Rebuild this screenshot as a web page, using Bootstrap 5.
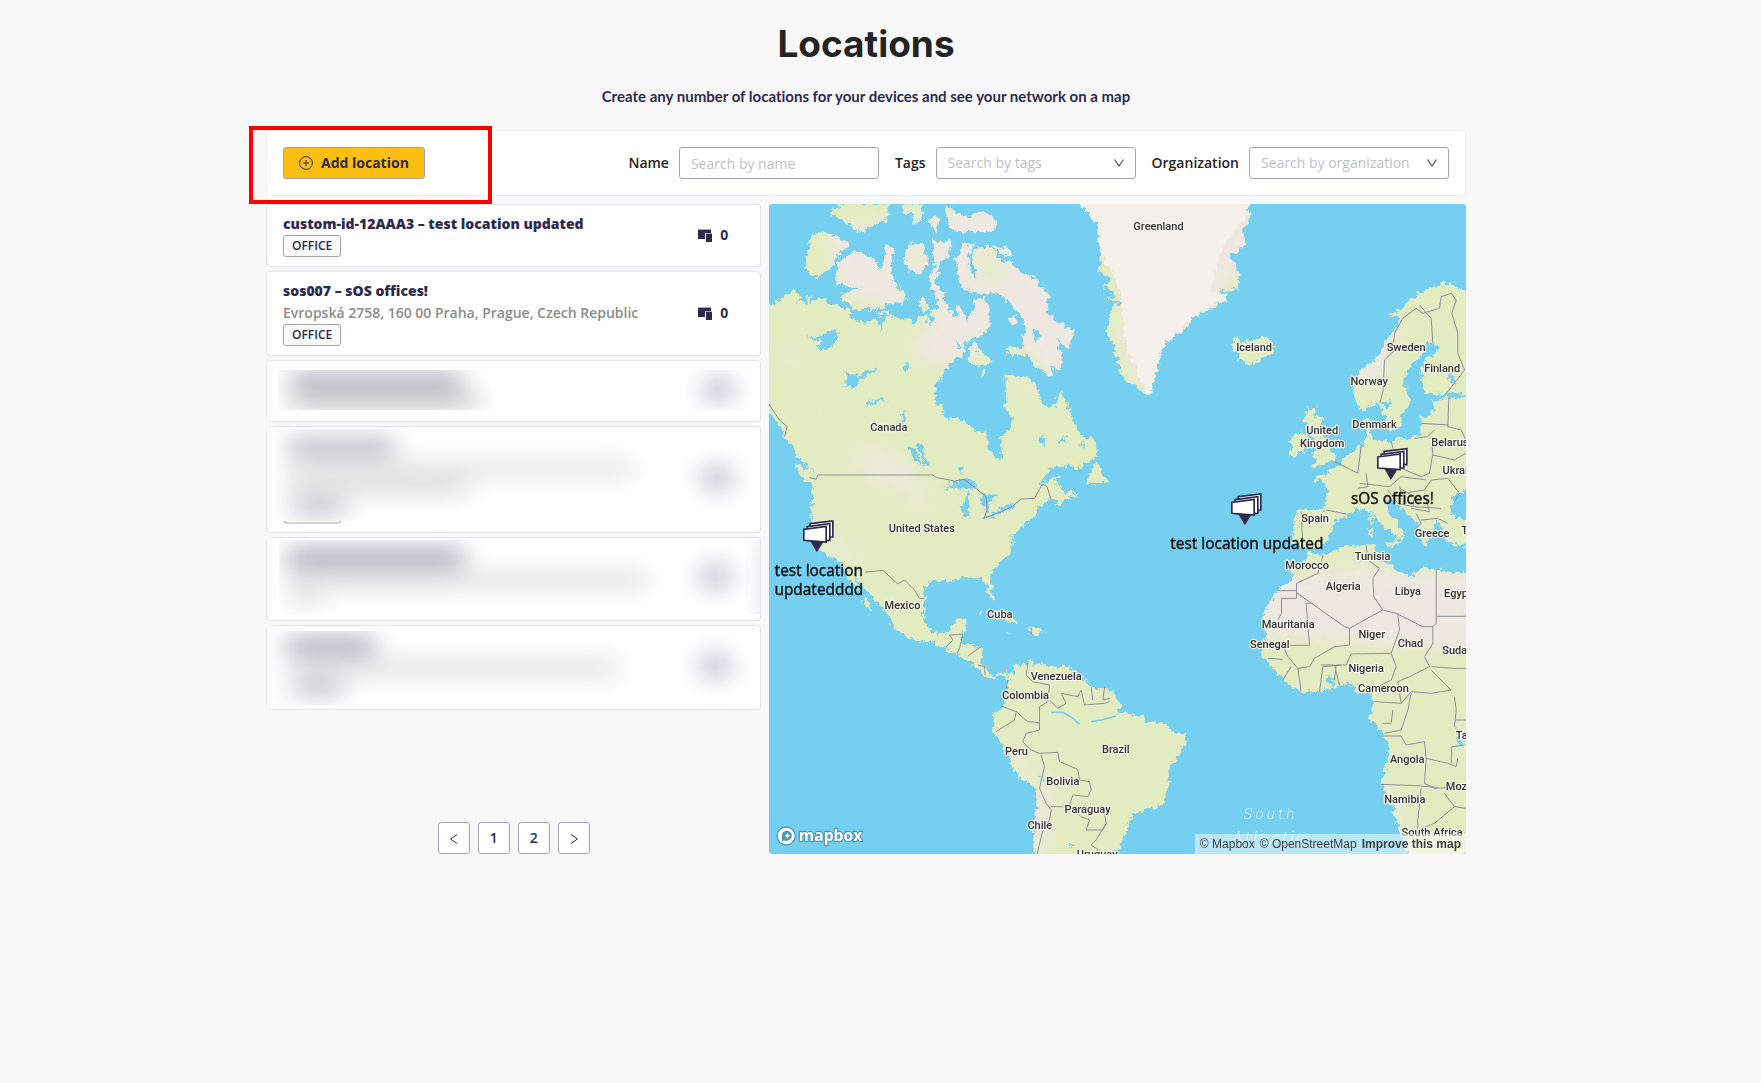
<!DOCTYPE html>
<html lang="en">
<head>
<meta charset="utf-8">
<meta name="viewport" content="width=device-width, initial-scale=1">
<title>Locations</title>
<link href="https://cdn.jsdelivr.net/npm/bootstrap@5.3.0/dist/css/bootstrap.min.css" rel="stylesheet">
<style>
  body { background: #f8f8f8; color: #232323; font: 400 14px/22px "Open Sans", "Noto Sans", sans-serif; }
  .page-shell { padding-right: 29px; }
  .page-inner { max-width: 1200px; margin: 0 auto; }
  .page-title { font: 700 37px/46px Inter, sans-serif; margin: 0; padding-top: 21px; }
  .page-lead { font: 700 15px/22px Lato, sans-serif; font-variant-ligatures: none; color: #2d2a4e; margin: 18px 0 23px; }
  .filter-bar { background: #fff; border: 1px solid #f0f0f0; border-radius: 4px; padding: 16px; margin-bottom: 8px; }
  .highlight-frame { top: -5px; left: -18px; width: 243px; height: 78px; border: 4px solid #f00; pointer-events: none; z-index: 2; }
  .btn-add { height: 32px; padding: 0 15px; border: 1px solid #a5a0bd; border-radius: 3px; background: #fbbf14; color: #2d2a4e; font-size: 14px; font-weight: 700; line-height: 22px; }
  .filter-label { font-weight: 600; }
  .filter-item { gap: 10px; }
  .field { width: 200px; height: 32px; padding: 4px 11px; border: 1px solid #a5a0bd; border-radius: 3px; font-size: 14px; line-height: 22px; color: #bfbfbf; }
  .field::placeholder { color: #bfbfbf; opacity: 1; }
  .form-select.field { padding-right: 28px; background-position: right 10px center; background-size: 12px 12px;
    background-image: url("data:image/svg+xml,%3Csvg xmlns='http://www.w3.org/2000/svg' viewBox='0 0 12 12'%3E%3Cpath d='M1.5 2.5 6 9l4.500-6.500' fill='none' stroke='%234b4770' stroke-width='1.200'/%3E%3C/svg%3E"); }
  .split { --bs-gutter-x: 8px; }
  .loc-list { gap: 4px; }
  .loc-card { background: #fff; border: 1px solid #e4e3ea; border-radius: 4px; padding: 8px 28px 9px 16px; overflow: hidden; }
  .loc-name { font-weight: 800; color: #2d2a4e; font-size: 14px; line-height: 22px; margin: 0; }
  .loc-address { color: #8c8c8c; font-weight: 600; }
  .loc-tag { height: 22px; line-height: 20px; font-size: 12px; font-weight: 600; padding: 0 8px; border: 1px solid #a5a0bd; border-radius: 3px; background: #fafafa; color: #2d2a4e; }
  .loc-count { font-weight: 700; color: #2d2a4e; gap: 8px; padding-right: 4px; }
  .hidden-card { padding: 0; }
  .hidden-card svg { display: block; width: 100%; }
  .page-btn { width: 32px; height: 32px; padding: 0; border: 1px solid #a5a0bd; border-radius: 3px; background: #fff; color: #2d2a4e; font-size: 14px; font-weight: 600; line-height: 30px; }
  .map-panel { height: 650px; border-radius: 4px; overflow: hidden; background: #75cff0; }
  .map-panel > svg { display: block; width: 100%; height: 100%; }
  .map-credit { right: 0; bottom: 0; height: 20px; padding: 0 5px; font: 12px/20px "Liberation Sans", Arial, sans-serif; background: rgba(255,255,255,.5); gap: 5px; }
  .map-credit a { color: #404040; text-decoration: none; }
  .country { font: 500 33px Roboto, sans-serif; fill: #333; stroke: #f6f5ee; stroke-width: 7px; paint-order: stroke; stroke-linejoin: round; text-anchor: middle; }
  .site { font: 400 46px "Noto Sans", sans-serif; fill: #111; stroke: #111; stroke-width: 1px; text-anchor: middle; }
  .ocean { font: italic 300 45px Roboto, sans-serif; fill: #c5eaf8; letter-spacing: 10px; text-anchor: middle; }
  .mapbox-word { font: 700 47px "Open Sans", sans-serif; fill: #fff; stroke: #4f97b3; stroke-width: 7px; paint-order: stroke; stroke-linejoin: round; }
</style>
</head>
<body>
<svg width="0" height="0" class="position-absolute" aria-hidden="true">
  <defs>
    <symbol id="devices" viewBox="0 0 14 13"><path fill="#2d2a4e" d="M0 0h13v4H7v6H0z M8 5h6v8H8z"/><path fill="#aaa8bb" d="M0 0h13v1H0z M8 4h6v1H8z"/></symbol>
    <filter id="soft" x="-60%" y="-120%" width="220%" height="340%"><feGaussianBlur stdDeviation="13 11"/></filter>
  </defs>
</svg>
<div class="page-shell">
<main class="page-inner">
  <header class="text-center">
    <h1 class="page-title">Locations</h1>
    <p class="page-lead">Create any number of locations for your devices and see your network on a map</p>
  </header>

  <form class="filter-bar position-relative d-flex align-items-center justify-content-between">
    <div class="highlight-frame position-absolute"></div>
    <button type="button" class="btn btn-add d-inline-flex align-items-center gap-2">
      <svg width="14" height="14" viewBox="0 0 14 14" fill="none" stroke="#2d2a4e" aria-hidden="true"><circle cx="7" cy="7" r="6.400"/><path d="M7 4v6M4 7h6"/></svg>
      Add location
    </button>
    <div class="d-flex align-items-center gap-3">
      <div class="filter-item d-flex align-items-center"><label class="filter-label" for="f-name">Name</label><input id="f-name" class="form-control field" type="text" placeholder="Search by name"></div>
      <div class="filter-item d-flex align-items-center"><label class="filter-label" for="f-tags">Tags</label><select id="f-tags" class="form-select field"><option>Search by tags</option></select></div>
      <div class="filter-item d-flex align-items-center"><label class="filter-label" for="f-org">Organization</label><select id="f-org" class="form-select field"><option>Search by organization</option></select></div>
    </div>
  </form>

  <div class="row split">
    <section class="col-5 d-flex flex-column">
      <div class="loc-list d-flex flex-column">
        <article class="loc-card d-flex align-items-center justify-content-between">
          <div><h2 class="loc-name">custom-id-12AAA3 – test location updated</h2><span class="loc-tag d-inline-block align-top">OFFICE</span></div>
          <div class="loc-count d-flex align-items-center"><svg width="14" height="13"><use href="#devices"/></svg>0</div>
        </article>
        <article class="loc-card d-flex align-items-center justify-content-between">
          <div><h2 class="loc-name">sos007 – sOS offices!</h2><div class="loc-address">Evropská 2758, 160 00 Praha, Prague, Czech Republic</div><span class="loc-tag d-inline-block align-top">OFFICE</span></div>
          <div class="loc-count d-flex align-items-center"><svg width="14" height="13"><use href="#devices"/></svg>0</div>
        </article>
        <article class="loc-card hidden-card">
          <svg height="60" viewBox="0 0 493 60" preserveAspectRatio="none" aria-hidden="true">
            <svg x="11" y="9" width="475" height="40" viewBox="11 9 475 40"><g filter="url(#soft)"><path fill="#bab8c6" d="M14 10h172v20H14z"/><path fill="#d2d2d2" d="M14 30h188v20H14z"/></g><circle cx="442" cy="29" r="15" fill="#c4c1d0" filter="url(#soft)"/></svg>
          </svg>
        </article>
        <article class="loc-card hidden-card">
          <svg height="105" viewBox="0 0 493 105" preserveAspectRatio="none" aria-hidden="true">
            <svg x="8" y="2" width="478" height="92" viewBox="8 2 478 92"><g filter="url(#soft)"><path fill="#c0becb" d="M14 10h106v20H14z"/><path fill="#e8e8e8" d="M14 32h345v20H14z"/><path fill="#e2e2e2" d="M14 46h180v24H14z"/><path fill="#c8c7d0" d="M18 72h52v18H18z"/></g><circle cx="442" cy="51" r="15" fill="#c4c1d0" filter="url(#soft)"/></svg>
            <path d="M17 94q1 2 3 2h51q2 0 3-2" fill="none" stroke="#a5a0bd"/>
          </svg>
        </article>
        <article class="loc-card hidden-card">
          <svg height="82" viewBox="0 0 493 82" preserveAspectRatio="none" aria-hidden="true">
            <svg x="12" y="2" width="481" height="74" viewBox="12 2 481 74"><g filter="url(#soft)"><path fill="#b8b6c5" d="M14 8h176v24H14z"/><path fill="#e4e4e4" d="M14 32h360v20H14z"/><path fill="#e4e4e4" d="M16 54h32v16H16z"/></g><circle cx="442" cy="39" r="15" fill="#c4c1d0" filter="url(#soft)"/><path fill="#d8d8e0" d="M491 0h30v90h-30z" filter="url(#soft)"/></svg>
          </svg>
        </article>
        <article class="loc-card hidden-card">
          <svg height="83" viewBox="0 0 493 83" preserveAspectRatio="none" aria-hidden="true">
            <svg x="5" y="5" width="481" height="74" viewBox="5 5 481 74"><g filter="url(#soft)"><path fill="#b8b6c5" d="M14 9h88v22H14z"/><path fill="#e6e6e6" d="M16 31h328v22H16z"/><path fill="#c8c7d0" d="M20 53h50v18H20z"/></g><circle cx="442" cy="40" r="15" fill="#c4c1d0" filter="url(#soft)"/></svg>
          </svg>
        </article>
      </div>
      <nav class="mt-auto d-flex justify-content-center gap-2" aria-label="Pages">
        <button type="button" class="page-btn" aria-label="Previous"><svg width="12" height="12" viewBox="0 0 12 12" fill="none" stroke="#2d2a4e"><path d="M9 1.500 2.500 6 9 10.500"/></svg></button>
        <button type="button" class="page-btn">1</button>
        <button type="button" class="page-btn">2</button>
        <button type="button" class="page-btn" aria-label="Next"><svg width="12" height="12" viewBox="0 0 12 12" fill="none" stroke="#2d2a4e"><path d="M3 1.500 9.500 6 3 10.500"/></svg></button>
      </nav>
    </section>

    <section class="col-7">
      <div class="map-panel position-relative">
        <svg viewBox="3 12 2091 1950" preserveAspectRatio="xMidYMid slice" role="img" aria-label="Map of locations">
          <defs>
            <filter id="coast" x="0" y="0" width="2100" height="1970" filterUnits="userSpaceOnUse"><feTurbulence type="fractalNoise" baseFrequency=".06" numOctaves="4" seed="4"/><feDisplacementMap in="SourceGraphic" scale="30" xChannelSelector="R" yChannelSelector="G"/></filter>
            <filter id="haze" x="-30%" y="-30%" width="160%" height="160%"><feGaussianBlur stdDeviation="24"/></filter>
            <g id="pin" fill="#fff" stroke="#2d2a4e" stroke-width="5">
              <path d="M-19-35 21-32 1 0z" fill="#2d2a4e" stroke="none"/>
              <path d="M-19-86 49-94v48l-68 0z"/><path d="M-28-77 40-86v50l-68 0z"/><path d="M-38-69 29-78v47l-67-5z"/>
            </g>
            <clipPath id="land">
              <path id="americas" d="M-20 300 20 312 30 300 60 285 85 268 97 290 95 305 115 310 122 280 130 305 150 292 170 300 200 315 240 325 255 340 243 352 270 362 300 365 320 358 335 375 340 390 345 360 370 342 385 355 440 365 465 355 480 362 490 378 495 350 488 330 510 320 515 298 530 300 545 320 555 350 570 345 565 315 580 320 590 345 600 375 605 350 620 320 625 290 650 295 665 320 665 380 640 405 605 410 590 440 585 475 560 475 550 490 525 515 510 545 502 575 502 615 525 620 530 655 570 655 600 675 630 695 655 700 658 745 675 765 690 780 703 770 700 740 695 710 725 690 732 665 725 640 705 615 715 600 718 575 712 545 715 522 745 530 770 525 800 545 815 575 818 605 840 625 865 615 870 590 880 578 895 610 910 640 918 670 940 700 975 720 988 740 988 765 965 790 940 800 855 800 830 830 805 860 830 845 870 825 880 832 850 845 875 850 880 870 905 880 935 875 930 885 900 895 875 918 862 915 870 900 848 900 830 908 805 925 800 955 770 970 760 985 735 1000 730 1050 725 1065 700 1085 672 1115 668 1150 683 1200 675 1205 660 1175 655 1150 640 1138 600 1132 570 1132 563 1145 530 1140 495 1142 470 1165 467 1220 465 1250 480 1280 505 1302 540 1295 553 1270 598 1258 590 1285 580 1305 575 1332 610 1332 645 1345 640 1390 655 1410 680 1430 690 1420 715 1417 725 1430 745 1395 775 1390 795 1378 790 1398 815 1390 860 1400 905 1402 925 1415 945 1430 965 1460 1015 1463 1040 1485 1064 1515 1046 1540 1126 1550 1136 1565 1191 1570 1226 1598 1251 1605 1253 1630 1231 1670 1206 1700 1201 1760 1186 1810 1166 1828 1126 1830 1086 1855 1078 1895 1051 1940 1020 2000H795L797 1900 805 1830 810 1765 760 1735 735 1705 715 1660 690 1620 672 1595 680 1540 710 1510 722 1470 720 1440 700 1422 680 1440 650 1428 615 1400 610 1385 560 1358 530 1345 500 1328 475 1332 430 1315 375 1285 368 1250 340 1225 315 1195 290 1165 258 1120 282 1185 300 1200 315 1233 290 1215 278 1180 250 1150 232 1105 215 1088 180 1072 160 1055 145 1030 130 960 135 850 105 835 82 800 82 790 120 805 150 835 115 795 90 770 70 740 50 710 35 680 20 650-20 620z"/>
              <path d="M130 105 160 97 220 115 240 140 215 160 190 200 150 238 112 205 120 150zM205 190 260 152 320 180 340 215 360 135 378 150 370 210 380 245 415 290 405 310 360 310 330 330 270 330 220 300 225 275 285 268 205 250zM190 40 215 10H365L355 60 300 85 262 97 250 75 215 60zM400 10H465L460 60 440 72 430 40 405 35zM480 60 500 45 515 65 505 90 485 78zM535 10 550 30 600 50 660 35 688 60 680 95 590 95 540 85zM405 175 425 135 470 125 480 190 450 230 430 210zM495 120 555 125 535 175 515 185 505 250 535 290 515 300 485 265 485 230 500 200zM570 240 565 170 590 130 620 132 600 170 610 220 630 235 610 165 630 140 675 138 690 180 730 185 760 220 800 235 840 280 835 335 870 370 918 395 900 445 865 415 885 480 875 515 845 495 860 535 800 500 780 465 715 465 720 440 770 445 765 415 780 385 740 320 690 280 620 280 580 260zM680 140 720 140 735 170 700 165zM445 300 470 290 485 320 465 335zM605 440 620 425 640 460 680 485 625 500 600 480zM725 360 740 345 750 370 735 380zM640 515 655 508 655 522 642 528zM955 850 985 780 1000 810 1020 850 1000 848 960 850zM455 350 480 345 478 365 458 368zM330 340 360 328 362 340 335 347z"/>
              <path d="M700 1240 725 1250 758 1272 735 1275zM780 1282 805 1282 832 1295 800 1305 780 1300zM640 1240 650 1238 645 1248zM712 1300 730 1300 725 1305z"/>
              <path id="greenland" d="M925 0 960 40 985 75 990 130 1000 160 995 215 1030 235 1010 260 1040 280 1020 300 1060 300 1025 340 1018 390 1035 430 1055 510 1090 555 1145 588 1160 540 1180 460 1190 430 1240 400 1285 345 1340 325 1385 290 1350 270 1415 265 1410 210 1385 165 1435 135 1425 90 1445 50 1440 0z"/>
              <path id="europe" d="M1390 420 1405 405 1420 425 1460 420 1500 408 1520 440 1500 470 1450 492 1415 480 1415 460 1392 450zM1615 625 1650 620 1640 645 1665 655 1655 675 1675 715 1690 755 1710 775 1690 785 1655 795 1625 800 1650 775 1632 765 1655 740 1640 715 1625 690 1610 660zM1570 725 1585 700 1615 705 1610 755 1575 772 1565 765zM2120 270 2081 270 2046 245 2011 255 1976 270 1931 290 1906 320 1866 345 1891 350 1881 385 1856 420 1826 480 1786 500 1761 530 1759 590 1771 625 1801 630 1831 605 1841 630 1856 665 1866 690 1886 690 1901 670 1901 640 1931 605 1925 590 1911 555 1911 520 1941 490 1961 460 1976 425 2011 435 2006 460 1966 485 1961 520 1971 580 2006 585 2056 575 2120 590 2026 595 1991 605 2001 625 1986 650 1961 650 1961 690 1946 710 1876 720 1846 725 1816 720 1806 700 1811 650 1791 665 1796 710 1781 740 1746 760 1706 800 1676 820 1636 835 1676 855 1676 900 1671 930 1586 925 1581 960 1576 1025 1606 1050 1626 1045 1671 1030 1691 1005 1696 975 1731 950 1766 925 1806 935 1830 960 1856 990 1895 1010 1870 1020 1885 1035 1905 1005 1890 970 1860 935 1850 895 1870 900 1896 920 1926 945 1951 975 1951 1000 1971 1035 1991 1005 2011 965 2040 1030 2120 1040V960L2060 950 2046 920 2066 880 2120 860zM1850 1030 1885 1025 1880 1040zM1805 985 1815 985 1812 1015 1803 1010zM1810 940 1815 940 1814 970 1808 970z"/>
              <path id="africa" d="M1626 1055 1671 1065 1726 1040 1786 1035 1821 1030 1826 1070 1851 1090 1886 1105 1906 1125 1946 1125 1956 1100 2006 1110 2120 1125V2000H1926L1906 1920 1886 1870 1876 1830 1841 1750 1846 1720 1866 1670 1861 1640 1846 1605 1806 1550 1816 1510 1811 1480 1766 1475 1756 1450 1726 1455 1666 1472 1601 1475 1566 1455 1526 1420 1501 1385 1481 1370 1491 1330 1496 1300 1481 1260 1506 1210 1536 1165 1571 1140 1576 1105 1616 1080z"/>
            </clipPath>
          </defs>
          <path fill="#75cff0" d="M0 0h2120v2000H0z"/>
          <g filter="url(#coast)">
            <g clip-path="url(#land)">
              <path fill="#e3ecc1" d="M-20 0h2140v2000H-20z"/>
              <g filter="url(#haze)" fill="#efe8e2">
                <path d="M160 90 700 0 950 400 880 560 560 240 420 470 600 500 690 380 600 260 400 330 230 290z"/>
                <path d="M505 350 640 330 640 430 520 460zM930-20H1450L1450 180 1330 300 1160 540 1110 540 1060 430 1080 250z"/>
                <path d="M230 760 330 730 440 800 470 870 340 860zM420 850 480 880 470 960 430 920zM750 540 800 550 810 600 770 590z" opacity=".7"/>
                <path d="M1480 1150 1620 1120 1800 1100 2120 1120V1350L1850 1340 1600 1310 1470 1320z"/>
                <path d="M1730 530 1870 370 1900 400 1820 560zM810 1730 850 1780 830 1980 790 1980zM1820 1740 1880 1800 1930 1980 1880 1980zM680 1590 760 1710 820 1740 750 1660z"/>
                <path d="M60 440 90 480 60 520 20 460zM100 600 150 640 130 660zM120 930 200 980 300 1120 200 1080z" opacity=".6"/>
              </g>
              <path fill="#f5f0eb" d="M925 0 985 75 1000 160 1040 230 1060 300 1075 440 1145 600 1180 450 1285 340 1385 290 1325 270 1370 130 1430 60 1440 0z"/>
              <g fill="#e3ecc1" filter="url(#haze)"><path d="M130 110 200 110 150 230 110 210zM390 140 480 130 480 220zM610 150 690 140 720 260 640 260zM210 20 360 20 300 80z" opacity=".7"/></g>
            </g>
            <path fill="#75cff0" d="M115 415 165 405 185 385 215 400 205 425 180 450 140 440 165 425zM232 510 250 525 275 530 300 508 325 510 290 530 260 560 225 560 240 540zM298 608 320 596 362 602 320 608 300 620zM405 495 428 488 420 512 408 512zM400 640 415 632 410 665 400 662zM420 742 440 745 465 800 445 785zM445 730 458 728 482 795 470 798zM560 422 585 440 575 442zM530 865 560 845 600 835 635 860 600 870 560 862zM590 890 615 880 600 910 605 950 585 950 582 915zM640 880 690 885 665 910 655 940 640 910zM645 955 700 930 695 942 655 960zM695 920 740 910 725 928 700 930zM805 712 830 710 835 740 820 725zM868 722 890 712 895 726zM935 735 955 724 945 738zM795 385 825 405 800 420zM570 805 585 800 580 820zM815 1732 830 1735 825 1748zM895 1935 912 1930 908 1945zM1848 610 1870 600 1866 620 1852 628zM1676 1422 1696 1430 1698 1460 1685 1455zM2060 1575 2068 1580 2085 1640 2072 1630zM2040 520 2060 525 2065 555 2045 545z"/>
          </g>
          <path fill="none" stroke="#75cff0" stroke-width="5" d="M850 1537 885 1537 915 1555 935 1573M970 1565 1000 1560 1045 1548"/>
          <g fill="none" stroke="#8f8f9b" stroke-width="3" stroke-linejoin="round">
            <path d="M0 608 35 660 58 680 50 710M125 833 145 838 150 825H495L505 832 560 843 590 838 630 870 655 890 658 930 648 955 700 935 735 918 760 897 800 895 823 853 837 858 850 900"/>
            <path d="M290 1117 345 1111 390 1152 410 1140 440 1170 455 1195 470 1195M535 1340 555 1320 545 1305 585 1302 575 1345 568 1358M600 1368 640 1340M780 1390 775 1425 795 1445 845 1455 840 1505 815 1520 815 1590 775 1600 765 1625 790 1650 815 1660 870 1657 875 1685 930 1708 935 1740 965 1745 970 1770 960 1790 915 1785 905 1815 940 1850 965 1860 955 1890 1005 1890 1015 1870 1010 1840 960 1830"/>
            <path d="M845 1500 870 1525 895 1510 880 1480 930 1490 940 1470 950 1515 1010 1510 1025 1505M970 1460 975 1500M1010 1462 1005 1500 1026 1495M700 1518 745 1535 740 1560 685 1595M745 1535 780 1565 815 1568M820 1665 830 1700 815 1765 835 1810 850 1830 845 1860 825 1890 808 1962M850 1820 885 1820M1015 1870 985 1920 970 1935 1010 1962"/>
            <path d="M1850 480 1846 570 1836 610M1850 480 1875 455 1880 400 1905 355 1945 325 1965 340 2015 325 2020 290 2050 280 2065 300 2052 340 2070 400 2070 460 2090 510 2040 575M1955 315 1990 355 1995 430M2043 590 2040 680 2080 690 2094 720M1960 670 2040 675M1940 715 1980 710 2000 690M1870 725 1876 745M1990 710 1995 760 1985 820 1960 830 1900 805M1995 765 2060 780 2094 760M1700 785 1770 820 1775 780 1780 735M1775 850 1865 860 1900 830 1976 840M1795 820 1800 860 1770 865M1895 860 1900 880 1970 870 1990 840 2040 835 2075 880 2060 905M1860 870 1890 910 1935 920 1940 890 1895 865M1935 920 2020 925M1945 940 1960 970 1940 990M1675 930 1735 942M1600 935 1605 1040M1975 900 1985 935 1930 925M1960 960 2010 955 2040 970"/>
            <path d="M1666 1065 1650 1120 1586 1150 1586 1195H1541V1240L1530 1260M1586 1178 1730 1280 1745 1285 1845 1230 1885 1240 1965 1280 1995 1280 2005 1270 2005 1110M1530 1172H1586M2008 1249H2094M1795 1035 1800 1080 1835 1105 1815 1135 1818 1190 1845 1230M1635 1210H1615L1625 1336H1560M1745 1285 1745 1335 1700 1340 1640 1375 1625 1400 1590 1405 1560 1370 1545 1335M1890 1240 1895 1290 1870 1360 1750 1362 1735 1395 1705 1395 1700 1440M1995 1280 1995 1330 1970 1370 1985 1400 1925 1430 1890 1445 1900 1510M1870 1360 1885 1400 1870 1440 1830 1460M1990 1400 2060 1405 2094 1405M1990 1410 2050 1470 1990 1480 1930 1475 1900 1510 1820 1505M1930 1480 1920 1530 1900 1590 1850 1600M1845 1608H1900L1915 1635 1970 1625 1975 1675 2040 1690 2065 1700 2070 1675M1975 1675 1970 1750 2000 1765 2094 1760M1840 1753 1945 1757 2010 1762M1960 1765 1950 1860 1950 1890M1960 1885 2000 1870 2060 1820 2030 1780M2060 1820 2094 1825M2060 1490 2065 1530 2060 1580M2050 1690 2052 1640 2090 1635M1655 1475 1665 1400 1720 1395M1600 1475 1590 1405M1660 1395 1700 1395 1715 1455M1545 1440 1570 1400M1500 1375 1545 1378M1480 1330 1550 1330"/>
            <path d="M790 1282V1302M720 1440 715 1465M630 1395 650 1400 652 1425M2094 1560 2065 1560M1845 1570H1870L1875 1530"/>
          </g>
          <g class="country">
            <text x="1172" y="90">Greenland</text><text x="363" y="693">Canada</text><text x="462" y="996">United States</text><text x="404" y="1227">Mexico</text><text x="696" y="1254">Cuba</text><text x="865" y="1440">Venezuela</text><text x="773" y="1498">Colombia</text><text x="746" y="1665">Peru</text><text x="1044" y="1659">Brazil</text><text x="885" y="1754">Bolivia</text><text x="959" y="1838">Paraguay</text><text x="816" y="1886">Chile</text><text x="988" y="1973">Uruguay</text>
            <text x="1459" y="452">Iceland</text><text x="1915" y="453">Sweden</text><text x="2023" y="515">Finland</text><text x="1804" y="556">Norway</text><text x="1820" y="684">Denmark</text><text x="1663" y="703">United</text><text x="1663" y="741">Kingdom</text><text x="2046" y="737">Belarus</text><text x="2080" y="821">Ukraine</text><text x="1642" y="966">Spain</text><text x="1993" y="1011">Greece</text><text x="2130" y="1001">Turkey</text>
            <text x="1814" y="1080">Tunisia</text><text x="1618" y="1106">Morocco</text><text x="1726" y="1169">Algeria</text><text x="1920" y="1184">Libya</text><text x="2070" y="1192">Egypt</text><text x="1561" y="1283">Mauritania</text><text x="1812" y="1315">Niger</text><text x="1928" y="1342">Chad</text><text x="1506" y="1343">Senegal</text><text x="2070" y="1361">Sudan</text><text x="1795" y="1416">Nigeria</text><text x="1847" y="1476">Cameroon</text><text x="2130" y="1616">Tanzania</text><text x="1918" y="1690">Angola</text><text x="2130" y="1769">Mozambique</text><text x="1911" y="1810">Namibia</text><text x="1993" y="1909">South Africa</text>
          </g>
          <g class="ocean"><text x="1508" y="1856">South</text><text x="1508" y="1927">Atlantic</text><text x="1508" y="1995">Ocean</text></g>
          <use href="#pin" x="1868" y="840"/><use href="#pin" x="1430" y="976"/><use href="#pin" x="146" y="1057"/>
          <g class="site"><text x="1874" y="911">sOS offices!</text><text x="1437" y="1046">test location updated</text><text x="153" y="1128">test location</text><text x="153" y="1185">updatedddd</text></g>
          <g><circle cx="55" cy="1908" r="29" fill="#4f97b3"/><circle cx="55" cy="1908" r="25" fill="#fff"/><path d="M42 1922V1906a15 15 0 1 1 15 16z" fill="#4f97b3"/><path d="M59 1898l3 6 6 3-6 3-3 6-3-6-6-3 6-3z" fill="#fff"/><text class="mapbox-word" x="93" y="1924">mapbox</text></g>
        </svg>
        <div class="map-credit position-absolute d-flex"><a href="#">© Mapbox</a><a href="#">© OpenStreetMap</a><a href="#" class="fw-bold">Improve this map</a></div>
      </div>
    </section>
  </div>
</main>
</div>
<script src="https://cdn.jsdelivr.net/npm/bootstrap@5.3.0/dist/js/bootstrap.bundle.min.js"></script>
</body>
</html>
